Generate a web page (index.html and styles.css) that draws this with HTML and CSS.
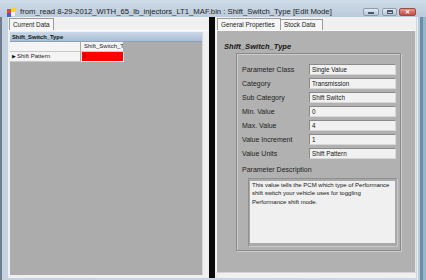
FILE: index.html
```html
<!DOCTYPE html>
<html>
<head>
<meta charset="utf-8">
<link rel="stylesheet" href="styles.css">
</head>
<body>
<div class="window">
  <div class="titlebar">
    <svg class="appicon" width="9" height="9" viewBox="0 0 9 9">
      <rect x="0" y="1" width="4" height="4" fill="#e0405a"/>
      <rect x="4" y="0" width="5" height="4" fill="#f2d43a"/>
      <rect x="0" y="5" width="4" height="4" fill="#3a62d8"/>
      <rect x="4" y="4" width="4" height="4" fill="#f0f0f0"/>
    </svg>
    <span class="title">from_read 8-29-2012_WITH_65_lb_injectors_LT1_MAF.bin : Shift_Switch_Type [Edit Mode]</span>
    <div class="caption-btns">
      <span class="cbtn min"><span class="glyph-min"></span></span>
      <span class="cbtn max"><span class="glyph-max"></span></span>
      <span class="cbtn close">✕</span>
    </div>
  </div>
  <div class="client">
    <div class="pane left-pane">
      <div class="tabs">
        <span class="tab active">Current Data</span>
      </div>
      <div class="page grid-page">
        <div class="grid">
          <div class="grid-caption">Shift_Switch_Type</div>
          <div class="grid-row">
            <div class="rowhead"></div>
            <div class="cell colhead">Shift_Switch_T</div>
          </div>
          <div class="grid-row">
            <div class="rowhead"><span class="arrow">▶</span>Shift Pattern</div>
            <div class="cell red"><span class="val">0</span></div>
          </div>
        </div>
      </div>
    </div>
    <div class="splitter"></div>
    <div class="pane right-pane">
      <div class="tabs">
        <span class="tab active">General Properties</span>
        <span class="tab">Stock Data</span>
      </div>
      <div class="page props">
        <div class="prop-title">Shift_Switch_Type</div>
        <div class="group">
          <div class="fields">
            <div class="field"><span class="lbl">Parameter Class</span><span class="box">Single Value</span></div>
            <div class="field"><span class="lbl">Category</span><span class="box">Transmission</span></div>
            <div class="field"><span class="lbl">Sub Category</span><span class="box">Shift Switch</span></div>
            <div class="field"><span class="lbl">Min. Value</span><span class="box">0</span></div>
            <div class="field"><span class="lbl">Max. Value</span><span class="box">4</span></div>
            <div class="field"><span class="lbl">Value Increment</span><span class="box">1</span></div>
            <div class="field"><span class="lbl">Value Units</span><span class="box">Shift Pattern</span></div>
          </div>
          <div class="desc-label">Parameter Description</div>
          <div class="desc-wrap">
            <div class="desc">This value tells the PCM which type of Performance shift switch your vehicle uses for toggling Performance shift mode.</div>
          </div>
        </div>
      </div>
    </div>
  </div>
</div>
</body>
</html>
```
FILE: styles.css
```css
* { box-sizing: border-box; margin: 0; padding: 0; }
html, body { width: 426px; height: 280px; overflow: hidden; }
body {
  font-family: "Liberation Sans", Arial, sans-serif;
  color: #111;
  background: #c6d4e2;
}
.window {
  width: 426px;
  height: 280px;
  display: flex;
  flex-direction: column;
  background: linear-gradient(to right, #6f7d8c 0, #6f7d8c 2px, #c4d2e0 2px, #cbd8e5 calc(100% - 9px), #e6edf3 calc(100% - 9px), #e6edf3 calc(100% - 8px), #b9cddb calc(100% - 8px), #b9cddb calc(100% - 6px), #6b8da6 calc(100% - 6px), #6b8da6 calc(100% - 3px), #9ab6c9 calc(100% - 3px));
}
.titlebar {
  height: 17px;
  flex: none;
  display: flex;
  align-items: center;
  padding: 6px 10px 0 7px;
  background: linear-gradient(#cedbe8, #bccbdb);
}
.appicon { flex: none; margin-top: 1px; }
.title {
  margin-left: 4px;
  font-size: 7.7px;
  color: #1d1d1d;
  white-space: nowrap;
}
.caption-btns {
  margin-left: auto;
  display: flex;
  gap: 2px;
  align-items: center;
  margin-top: 1px;
}
.cbtn {
  height: 8px;
  border: 1px solid #8d9db0;
  border-radius: 2px;
  background: linear-gradient(#e4ebf2, #b6c5d4);
  display: flex;
  align-items: center;
  justify-content: center;
}
.cbtn.min { width: 16px; margin-right: 1px; }
.cbtn.max { width: 15px; }
.cbtn.close {
  width: 17px;
  background: linear-gradient(#e79a8f, #c5493d);
  border-color: #9b4a45;
  color: #fff;
  font-size: 6px;
  line-height: 6px;
  font-weight: bold;
}
.glyph-min { width: 6px; height: 2px; background: #4a5a6c; margin-top: 2px; }
.glyph-max { width: 6px; height: 4px; border: 1px solid #4a5a6c; border-top-width: 2px; }

.client {
  flex: 1;
  display: flex;
  margin: 0 10px 2px 8px;
  background: #f0f0f0;
}
.pane {
  width: 201px;
  display: flex;
  flex-direction: column;
  background: #f0f0f0;
}
.splitter { width: 6px; background: #0a0a0a; flex: none; }

.tabs {
  height: 13px;
  flex: none;
  display: flex;
  align-items: flex-end;
  padding-left: 1px;
}
.tab {
  height: 12px;
  padding: 0 3px;
  font-size: 6.4px;
  line-height: 11px;
  border: 1px solid #9c9c9c;
  border-bottom: none;
  background: #f6f6f6;
  color: #222;
  white-space: nowrap;
}
.tab + .tab { border-left: none; height: 11px; line-height: 10px; }
.right-pane .tabs { padding-left: 2px; }
.right-pane .tab.active { width: 64px; }
.right-pane .tab + .tab { width: 42px; }

.page { flex: 1; display: flex; flex-direction: column; }

.grid-page {
  padding: 1px 6px 3px 2px;
  border-top: 1px solid #fbfbfb;
}
.grid {
  flex: 1;
  background: #acacac;
  border-right: 1px solid #d6d6d6;
}
.grid-caption {
  height: 10px;
  font-size: 5.8px;
  line-height: 10px;
  font-weight: bold;
  padding-left: 2px;
  background: linear-gradient(#c9d8e7, #a9bed4);
  border-bottom: 1px solid #8ea3b9;
  color: #101010;
}
.grid-row { display: flex; height: 10px; }
.rowhead {
  width: 71px;
  background: #f4f4f4;
  border-right: 1px solid #a8a8a8;
  border-bottom: 1px solid #c9c9c9;
  font-size: 6px;
  line-height: 9px;
  color: #222;
  display: flex;
  align-items: center;
}
.arrow { font-size: 5px; width: 7px; text-align: center; color: #111; }
.cell {
  width: 43px;
  font-size: 6px;
  line-height: 9px;
  border-right: 1px solid #a8a8a8;
  border-bottom: 1px solid #c9c9c9;
  white-space: nowrap;
  overflow: hidden;
}
.colhead { background: #f4f4f4; padding-left: 3px; color: #222; }
.red { background: #ff0000; border: 1px solid #e9e9e9; border-top: none; }
.val { font-size: 5px; color: #7a0000; padding-left: 1px; }

.props {
  margin: 0 0 5px 1px;
  background: #b1b1b1;
  border-top: 1px solid #fafafa;
  border-left: 1px solid #fafafa;
  border-right: 1px solid #e4e4e4;
  border-bottom: 1px solid #d4d4d4;
  padding: 11px 0 0 7px;
}
.prop-title {
  font-size: 7.6px;
  line-height: 9px;
  font-weight: bold;
  font-style: italic;
  color: #151515;
}
.group {
  margin: 2px 0 0 12px;
  width: 165px;
  height: 198px;
  border: 1px solid #8a8a8a;
  box-shadow: 1px 1px 0 #cdcdcd, inset 1px 1px 0 #cdcdcd;
  padding: 10px 0 0 5px;
}
.fields { display: flex; flex-direction: column; gap: 3px; }
.field { display: flex; height: 11px; align-items: center; }
.lbl {
  width: 67px;
  font-size: 7px;
  color: #222;
  white-space: nowrap;
}
.box {
  width: 87px;
  height: 11px;
  background: #f1f1f1;
  border: 1px solid #d8d8d8;
  border-top-color: #8a8a8a;
  border-left-color: #8a8a8a;
  font-size: 6.3px;
  line-height: 9px;
  padding-left: 2px;
  color: #151515;
  white-space: nowrap;
}
.desc-label {
  margin-top: 7px;
  font-size: 7px;
  line-height: 8px;
  color: #222;
}
.desc-wrap {
  margin: 4px 0 0 6px;
  width: 150px;
  height: 69px;
  border: 1px solid #8f8f8f;
  border-right-color: #c8c8c8;
  border-bottom-color: #c8c8c8;
  background: #a9a9a9;
  padding: 2px 2px 3px 1px;
}
.desc {
  height: 100%;
  background: #f0f0f0;
  font-size: 6px;
  line-height: 8.3px;
  padding: 0 1px 0 2px;
  color: #151515;
}
```
